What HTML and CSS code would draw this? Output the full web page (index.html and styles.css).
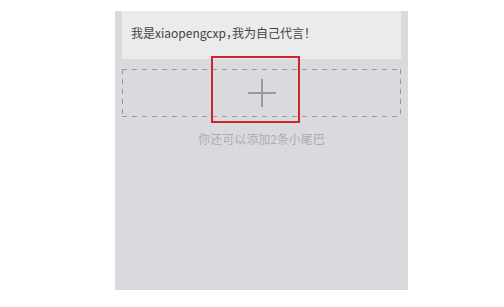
FILE: index.html
```html
<!DOCTYPE html>
<html lang="zh-CN">
<head>
<meta charset="utf-8">
<link rel="stylesheet" href="styles.css">
</head>
<body>
<div class="panel">
  <div class="card">我是xiaopengcxp，我为自己代言！</div>
  <div class="add-box">
    <svg class="plus" width="28" height="28" viewBox="0 0 28 28"><path d="M14 0V28M0 14H28" stroke="#9a9a9a" stroke-width="2" fill="none"/></svg>
    <div class="highlight"></div>
  </div>
  <div class="hint">你还可以添加2条小尾巴</div>
</div>
</body>
</html>
```
FILE: styles.css
```css
html, body {
  margin: 0;
  padding: 0;
  background: #fff;
}
body {
  padding-top: 11px;
  font-family: "Noto Sans CJK SC", "Liberation Sans", sans-serif;
}
.panel {
  margin-left: 115px;
  width: 293px;
  height: 279px;
  box-sizing: border-box;
  padding: 0 7px;
  background: #d9dadd;
  display: flex;
  flex-direction: column;
}
.card {
  height: 48px;
  background: #ebebeb;
  padding-left: 9px;
  padding-bottom: 5px;
  display: flex;
  align-items: center;
  font-size: 12px;
  color: #444;
  box-sizing: border-box;
  font-feature-settings: "halt";
}
.add-box {
  position: relative;
  margin-top: 10px;
  height: 48px;
  display: flex;
  align-items: center;
  justify-content: center;
  background:
    linear-gradient(to right, #999 55%, transparent 0) left top / 10px 1px repeat-x,
    linear-gradient(to right, #999 55%, transparent 0) left bottom / 10px 1px repeat-x,
    linear-gradient(to bottom, #999 55%, transparent 0) left top / 1px 10px repeat-y,
    linear-gradient(to bottom, #999 55%, transparent 0) right top / 1px 10px repeat-y;
}
.highlight {
  position: absolute;
  left: 89px;
  top: -13px;
  width: 89px;
  height: 67px;
  box-sizing: border-box;
  border: 2px solid #d0242b;
}
.hint {
  margin-top: 13px;
  text-align: center;
  font-size: 12px;
  color: #adadad;
  line-height: 17px;
}
```
